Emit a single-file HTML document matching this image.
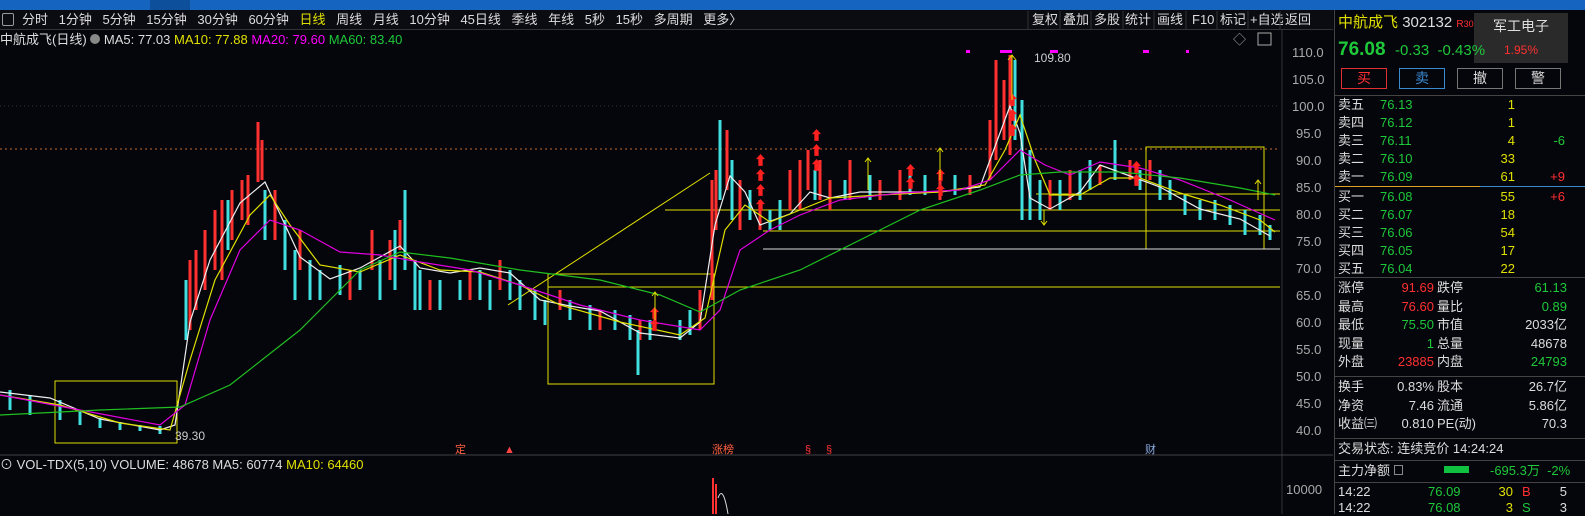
<!DOCTYPE html><html><head><meta charset="utf-8"><style>
*{margin:0;padding:0;box-sizing:border-box}
body{width:1585px;height:514px;background:#05050c;overflow:hidden;position:relative;font-family:"Liberation Sans","Noto Sans CJK SC",sans-serif;font-size:13px;color:#ccc}
.a{position:absolute;white-space:nowrap;line-height:16px}
.g{color:#1ec93a}.r{color:#ff3030}.y{color:#e0e000}.w{color:#ddd}.m{color:#f0f}
.rt{text-align:right}
.tb{position:absolute;top:12px;color:#ddd;font-size:13px;line-height:16px}
</style></head><body>
<div class="a" style="left:0;top:0;width:1585px;height:10px;background:#1565c0"></div>
<div class="a" style="left:150px;top:0;width:40px;height:10px;background:#0e4f9c"></div>
<div class="a" style="left:0;top:10px;width:1333px;height:20px;background:#0b0b12;border-bottom:1px solid #333"></div>
<div class="a" style="left:2px;top:13px;width:12px;height:13px;border:1px solid #999;border-radius:2px"></div>
<div class="a w" style="left:22px;top:12px;word-spacing:7px">分时 1分钟 5分钟 15分钟 30分钟 60分钟 <span class="y">日线</span> 周线 月线 10分钟 45日线 季线 年线 5秒 15秒 多周期 更多〉</div>
<div class="tb" style="left:1032px">复权</div><div class="tb" style="left:1063px">叠加</div><div class="tb" style="left:1094px">多股</div><div class="tb" style="left:1125px">统计</div><div class="tb" style="left:1157px">画线</div><div class="tb" style="left:1192px">F10</div><div class="tb" style="left:1220px">标记</div><div class="tb" style="left:1250px">+自选</div><div class="tb" style="left:1285px">返回</div>
<div class="a w" style="left:0;top:32px">中航成飞(日线) <span style="display:inline-block;width:10px;height:10px;border-radius:5px;background:#888"></span> MA5: 77.03 <span class="y">MA10: 77.88</span> <span class="m">MA20: 79.60</span> <span class="g">MA60: 83.40</span></div>
<div class="a" style="left:1334px;top:10px;width:1px;height:504px;background:#444"></div>
<svg class="a" style="left:0;top:0" width="1333" height="514">
<g stroke="#333"><line x1="1028" y1="11" x2="1028" y2="29"/><line x1="1060" y1="11" x2="1060" y2="29"/><line x1="1091" y1="11" x2="1091" y2="29"/><line x1="1123" y1="11" x2="1123" y2="29"/><line x1="1154" y1="11" x2="1154" y2="29"/><line x1="1186" y1="11" x2="1186" y2="29"/><line x1="1217" y1="11" x2="1217" y2="29"/><line x1="1248" y1="11" x2="1248" y2="29"/><line x1="1280" y1="11" x2="1280" y2="29"/></g>
<g font-size="13" fill="#aaa" font-family="Liberation Sans">
<text x="1292" y="57">110.0</text><text x="1292" y="84">105.0</text><text x="1292" y="111">100.0</text><text x="1296" y="138">95.0</text><text x="1296" y="165">90.0</text><text x="1296" y="192">85.0</text><text x="1296" y="219">80.0</text><text x="1296" y="246">75.0</text><text x="1296" y="273">70.0</text><text x="1296" y="300">65.0</text><text x="1296" y="327">60.0</text><text x="1296" y="354">55.0</text><text x="1296" y="381">50.0</text><text x="1296" y="408">45.0</text><text x="1296" y="435">40.0</text><text x="1286" y="494">10000</text>
</g>
<line x1="1282" y1="30" x2="1282" y2="514" stroke="#333"/>
<line x1="0" y1="455" x2="1333" y2="455" stroke="#444"/>
<line x1="0" y1="149" x2="1280" y2="149" stroke="#c86a30" stroke-dasharray="2,3"/>
<line x1="0" y1="106" x2="1280" y2="106" stroke="#333" stroke-dasharray="1,3"/>
<g stroke="#e0e000" fill="none" stroke-width="1">
<rect x="55" y="381" width="122" height="62"/><rect x="548" y="274" width="166" height="110"/><rect x="1146" y="147" width="118" height="102"/>
<line x1="1036" y1="194" x2="1280" y2="194"/><line x1="665" y1="210" x2="1280" y2="210"/><line x1="763" y1="231" x2="1280" y2="231"/><line x1="548" y1="287" x2="1280" y2="287"/><line x1="508" y1="305" x2="710" y2="173"/>
</g>
<line x1="763" y1="249" x2="1280" y2="249" stroke="#ddd"/>
<path stroke="#ff3030" stroke-width="3" fill="none" d="M190 260v70M196 250v60M205 230v60M215 210v60M222 200v80M232 190v50M242 180v40M248 175v50M258 122v60M262 140v40M275 190v50M300 230v40M350 270v30M372 230v40M390 240v40M400 220v30M430 280v30M470 270v30M500 260v30M560 290v20M600 310v20M640 320v20M655 310v20M700 290v40M712 180v120M716 170v60M727 130v60M740 180v50M760 200v30M790 170v40M800 160v50M808 150v40M820 160v40M830 180v30M850 160v40M880 180v20M900 170v30M940 170v30M970 175v20M990 120v60M996 60v100M1004 80v60M1010 55v100M1050 180v30M1070 170v30M1100 165v20M1130 160v20M1150 160v20"/>
<path stroke="#40e0e0" stroke-width="3" fill="none" d="M10 390v20M30 395v20M60 400v20M80 410v15M100 418v10M120 422v8M140 425v6M160 426v8M186 280v60M228 200v50M265 190v50M285 220v50M295 250v50M310 260v40M320 270v30M340 265v30M360 270v20M380 260v40M395 230v60M405 190v80M415 260v50M420 270v40M440 280v30M460 280v20M480 270v30M490 280v30M510 270v30M520 280v30M535 290v30M545 300v25M570 300v20M590 305v25M615 310v20M630 315v25M638 330v45M650 320v20M680 320v20M690 310v25M720 120v80M732 160v60M750 190v30M770 210v20M780 200v30M815 170v30M845 180v20M870 175v25M910 175v20M925 175v20M955 175v20M1015 60v80M1022 100v120M1030 150v70M1040 180v40M1060 180v30M1080 170v30M1090 160v30M1115 140v40M1140 170v20M1160 170v30M1170 180v20M1185 195v20M1200 200v20M1215 200v20M1230 205v20M1245 210v25M1260 215v20M1270 225v15"/>
<polyline fill="none" stroke="#eee" stroke-width="1.2" points="0,392 50,398 100,419 160,430 175,425 190,322 210,260 240,203 265,182 280,214 300,257 330,279 360,268 400,246 420,268 450,273 480,268 510,273 540,300 570,306 600,311 640,333 680,338 700,322 715,225 730,176 745,192 760,225 790,214 810,192 830,198 860,192 900,192 940,192 980,187 1000,133 1010,106 1020,133 1030,198 1050,209 1080,192 1100,165 1130,176 1160,187 1200,209 1240,219 1270,236"/>
<polyline fill="none" stroke="#e0e000" stroke-width="1.2" points="0,395 60,405 120,423 170,430 190,360 215,280 250,215 270,195 290,225 320,265 360,272 400,255 440,270 480,272 520,285 560,305 620,322 680,335 705,318 725,230 745,205 770,222 800,210 830,198 880,195 940,192 985,185 1005,150 1020,115 1035,160 1050,195 1080,195 1110,178 1140,178 1180,193 1220,205 1260,220 1275,232"/>
<polyline fill="none" stroke="#e000e0" stroke-width="1.2" points="0,395 80,410 160,425 185,405 210,320 240,250 270,220 300,230 340,252 380,255 420,262 470,270 520,285 580,305 640,320 700,330 720,310 740,250 770,230 800,215 840,200 900,193 960,190 990,180 1020,150 1045,165 1070,175 1100,162 1140,168 1180,180 1230,200 1275,220"/>
<polyline fill="none" stroke="#20c020" stroke-width="1.2" points="0,415 100,410 180,407 230,385 300,330 360,270 400,252 450,258 520,270 600,280 660,295 700,312 740,290 800,270 860,240 920,210 980,190 1020,175 1060,172 1120,172 1180,178 1240,188 1275,195"/>
<g font-size="12" fill="#ccc"><text x="175" y="440">39.30</text><text x="1034" y="62">109.80</text></g>
<g fill="#ff2020" font-size="13">
<text x="754" y="165">⬆</text><text x="754" y="180">⬆</text><text x="754" y="195">⬆</text><text x="754" y="210">⬆</text><text x="810" y="140">⬆</text><text x="810" y="155">⬆</text><text x="810" y="170">⬆</text><text x="904" y="175">⬆</text><text x="904" y="188">⬆</text><text x="934" y="180">⬆</text><text x="934" y="195">⬆</text><text x="1006" y="105">⬆</text><text x="1006" y="120">⬆</text><text x="1006" y="135">⬆</text><text x="1130" y="172">⬆</text><text x="1130" y="185">⬆</text><text x="648" y="318">⬆</text><text x="648" y="330">⬆</text>
</g>
<g stroke="#e0e000" fill="none"><path d="M1012 100V55M1008 60l4-5 4 5M868 190v-32M865 162l3-4 3 4M940 180v-32M937 152l3-4 3 4M1258 200v-20M1255 184l3-4 3 4M1044 210v15M1041 221l3 4 3-4M655 320v-28M652 296l3-4 3 4"/></g>
<g fill="#f0f"><rect x="966" y="50" width="4" height="3"/><rect x="1000" y="50" width="12" height="3"/><rect x="1050" y="50" width="8" height="3"/><rect x="1143" y="50" width="6" height="3"/><rect x="1186" y="50" width="3" height="3"/></g>
<g font-size="11"><text x="455" y="453" fill="#ff6040">定</text><text x="712" y="453" fill="#ff6040">涨榜</text><text x="805" y="453" fill="#f33">§</text><text x="826" y="453" fill="#f33">§</text><text x="1145" y="453" fill="#8ad">财</text><text x="504" y="453" fill="#f44">▲</text></g>
<path stroke="#ff3030" stroke-width="2" d="M713 478v36M716 484v30"/><path stroke="#ddd" fill="none" d="M718 498q5-14 10 16"/>
<text x="1233" y="44" fill="#aaa" font-size="13">◇</text><rect x="1258" y="33" width="13" height="12" fill="none" stroke="#aaa"/>
</svg>
<div class="a w" style="left:0;top:457px">⊙ VOL-TDX(5,10) VOLUME: 48678 MA5: 60774 <span class="y">MA10: 64460</span></div>
<div class="a" style="left:1338px;top:14px;font-size:15px;line-height:18px"><span class="y">中航成飞</span> <span class="w">302132</span> <span class="r" style="font-size:10px">R</span><span class="r" style="font-size:9px">300</span></div>
<div class="a" style="left:1474px;top:13px;width:94px;height:50px;background:#2a2a2a;text-align:center;font-size:14px;line-height:20px"><div style="margin-top:3px" class="w">军工电子</div><div class="r" style="font-size:12px;margin-top:4px">1.95%</div></div>
<div class="a" style="left:1338px;top:39px;font-size:19px;line-height:22px"><b class="g">76.08</b> <span class="g" style="font-size:15px">&nbsp;-0.33 &nbsp;-0.43%</span></div>
<div class="a r" style="left:1341px;top:68px;width:46px;height:21px;border:1px solid #e03030;text-align:center;line-height:19px;font-size:14px">买</div>
<div class="a" style="left:1399px;top:68px;width:46px;height:21px;border:1px solid #3a8ad0;color:#3a8ad0;text-align:center;line-height:19px;font-size:14px">卖</div>
<div class="a w" style="left:1457px;top:68px;width:46px;height:21px;border:1px solid #777;text-align:center;line-height:19px;font-size:14px">撤</div>
<div class="a w" style="left:1515px;top:68px;width:46px;height:21px;border:1px solid #777;text-align:center;line-height:19px;font-size:14px">警</div>
<div class="a" style="left:1335px;top:95px;width:250px;height:1px;background:#444"></div>
<div class="a" style="left:1335px;top:186px;width:145px;height:1px;background:#e0a020"></div>
<div class="a" style="left:1480px;top:186px;width:105px;height:1px;background:#3a8ad0"></div>
<div class="a w" style="left:1338px;top:96px;line-height:18px">卖五<br>卖四<br>卖三<br>卖二<br>卖一</div>
<div class="a g" style="left:1380px;top:96px;line-height:18px">76.13<br>76.12<br>76.11<br>76.10<br>76.09</div>
<div class="a y rt" style="left:1480px;top:96px;width:35px;line-height:18px">1<br>1<br>4<br>33<br>61</div>
<div class="a rt" style="left:1530px;top:96px;width:35px;line-height:18px"><br><br><span class="g">-6</span><br><br><span class="r">+9</span></div>
<div class="a w" style="left:1338px;top:188px;line-height:18px">买一<br>买二<br>买三<br>买四<br>买五</div>
<div class="a g" style="left:1380px;top:188px;line-height:18px">76.08<br>76.07<br>76.06<br>76.05<br>76.04</div>
<div class="a y rt" style="left:1480px;top:188px;width:35px;line-height:18px">55<br>18<br>54<br>17<br>22</div>
<div class="a r rt" style="left:1530px;top:188px;width:35px;line-height:18px">+6</div>
<div class="a" style="left:1335px;top:277px;width:250px;height:1px;background:#444"></div>
<div class="a w" style="left:1338px;top:279px;line-height:18.6px">涨停<br>最高<br>最低<br>现量<br>外盘</div>
<div class="a rt" style="left:1380px;top:279px;width:54px;line-height:18.6px"><span class="r">91.69</span><br><span class="r">76.60</span><br><span class="g">75.50</span><br><span class="g">1</span><br><span class="r">23885</span></div>
<div class="a w" style="left:1437px;top:279px;line-height:18.6px">跌停<br>量比<br>市值<br>总量<br>内盘</div>
<div class="a rt" style="left:1500px;top:279px;width:67px;line-height:18.6px"><span class="g">61.13</span><br><span class="g">0.89</span><br><span class="w">2033亿</span><br><span class="w">48678</span><br><span class="g">24793</span></div>
<div class="a" style="left:1335px;top:376px;width:250px;height:1px;background:#444"></div>
<div class="a w" style="left:1338px;top:378px;line-height:18.6px">换手<br>净资<br>收益㈢</div>
<div class="a w rt" style="left:1380px;top:378px;width:54px;line-height:18.6px">0.83%<br>7.46<br>0.810</div>
<div class="a w" style="left:1437px;top:378px;line-height:18.6px">股本<br>流通<br>PE(动)</div>
<div class="a w rt" style="left:1500px;top:378px;width:67px;line-height:18.6px">26.7亿<br>5.86亿<br>70.3</div>
<div class="a" style="left:1335px;top:438px;width:250px;height:1px;background:#444"></div>
<div class="a w" style="left:1338px;top:441px">交易状态: 连续竞价 14:24:24</div>
<div class="a" style="left:1335px;top:460px;width:250px;height:1px;background:#444"></div>
<div class="a w" style="left:1338px;top:463px">主力净额 <span style="display:inline-block;width:9px;height:10px;border:1px solid #888"></span></div>
<div class="a" style="left:1444px;top:466px;width:25px;height:7px;background:#10c040"></div>
<div class="a g" style="left:1490px;top:463px">-695.3万 &nbsp;-2%</div>
<div class="a" style="left:1335px;top:482px;width:250px;height:1px;background:#444"></div>
<div class="a w" style="left:1338px;top:484px;line-height:16px">14:22<br>14:22</div>
<div class="a g" style="left:1428px;top:484px;line-height:16px">76.09<br>76.08</div>
<div class="a y rt" style="left:1490px;top:484px;width:23px;line-height:16px">30<br>3</div>
<div class="a" style="left:1522px;top:484px;line-height:16px"><span class="r">B</span><br><span class="g">S</span></div>
<div class="a w rt" style="left:1550px;top:484px;width:17px;line-height:16px">5<br>3</div>
</body></html>
